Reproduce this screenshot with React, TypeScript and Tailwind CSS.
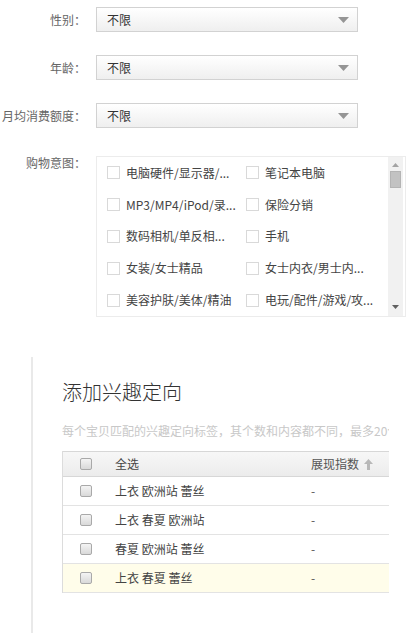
import React from 'react';

const font = { fontFamily: '"Noto Sans CJK SC", "Liberation Sans", sans-serif' };

const selects = ['性别：', '年龄：', '月均消费额度：'];

const intents = [
  ['电脑硬件/显示器/...', '笔记本电脑'],
  ['MP3/MP4/iPod/录...', '保险分销'],
  ['数码相机/单反相...', '手机'],
  ['女装/女士精品', '女士内衣/男士内...'],
  ['美容护肤/美体/精油', '电玩/配件/游戏/攻...'],
];

const rows = ['上衣 欧洲站 蕾丝', '上衣 春夏 欧洲站', '春夏 欧洲站 蕾丝', '上衣 春夏 蕾丝'];

function Select({ label }: { label: string }) {
  return (
    <div className="flex items-center h-[25px]">
      <div className="w-[87px] text-right text-[12px] text-[#666] pr-[1px]">{label}</div>
      <div className="ml-[9px] w-[262px] h-[25px] border border-[#d2d2d2] bg-gradient-to-b from-white to-[#efefef] flex items-center justify-between pl-[10px] pr-[8px]">
        <span className="text-[12px] text-[#333]">不限</span>
        <svg width="11" height="6" viewBox="0 0 11 6">
          <path d="M0 0 L11 0 L5.5 6 Z" fill="#959595" />
        </svg>
      </div>
    </div>
  );
}

function Box() {
  return <span className="block w-[13px] h-[13px] border border-[#d9d9d9] bg-white shrink-0" />;
}

function RoundBox() {
  return (
    <span className="block w-[12px] h-[12px] rounded-[2px] border border-[#a9a9a9] bg-gradient-to-b from-[#f4f4f4] to-[#d9d9d9] shrink-0" />
  );
}

export default function App() {
  return (
    <div className="w-[413px] h-[633px] bg-white overflow-hidden relative" style={font}>
      <div className="pt-[7px] flex flex-col gap-[23px]">
        {selects.map((s) => (
          <Select key={s} label={s} />
        ))}
      </div>

      <div className="flex mt-[28px]">
        <div className="w-[87px] text-right text-[12px] text-[#666] leading-[14px] pr-[1px]">购物意图：</div>
        <div className="ml-[9px] w-[310px] h-[161px] border border-[#ececec] flex">
          <div className="flex-1 flex flex-col">
            {intents.map((pair, i) => (
              <div key={i} className="h-[32px] flex items-center pl-[10px]">
                {pair.map((t) => (
                  <div key={t} className="w-[139px] flex items-center gap-[6px]">
                    <Box />
                    <span className="text-[12px] text-[#444] whitespace-nowrap">{t}</span>
                  </div>
                ))}
              </div>
            ))}
          </div>
          <div className="w-[15px] bg-[#f1f1f1] flex flex-col items-center mr-[2px]">
            <svg width="7" height="4" viewBox="0 0 7 4" className="mt-[6px]">
              <path d="M0 4 L7 4 L3.5 0 Z" fill="#a3a3a3" />
            </svg>
            <div className="mt-[4px] w-[11px] h-[17px] bg-[#c2c2c2] border border-[#b4b4b4]" />
            <div className="flex-1" />
            <svg width="7" height="4" viewBox="0 0 7 4" className="mb-[7px]">
              <path d="M0 0 L7 0 L3.5 4 Z" fill="#606060" />
            </svg>
          </div>
        </div>
      </div>

      <div className="mt-[40px] ml-[31px] border-l-2 border-[#e9e9e9] h-[280px] pl-[29px] w-[358px] overflow-hidden">
        <div className="pt-[22px] text-[20px] leading-[26px] text-[#333] font-light whitespace-nowrap">添加兴趣定向</div>
        <div className="mt-[19px] text-[12px] leading-[14px] text-[#c8c8c8] whitespace-nowrap">
          每个宝贝匹配的兴趣定向标签，其个数和内容都不同，最多20个
        </div>
        <div className="mt-[13px] w-[360px] border-l border-[#dcdcdc]">
          <div className="h-[26px] flex items-center border-t border-b border-[#d7d7d7] bg-gradient-to-b from-[#f7f7f7] to-[#ececec]">
            <div className="w-[52px] pl-[17px]">
              <RoundBox />
            </div>
            <div className="w-[196px] text-[12px] text-[#444]">全选</div>
            <div className="flex items-center gap-[5px] text-[12px] text-[#555]">
              展现指数
              <svg width="9" height="11" viewBox="0 0 9 11">
                <path d="M4.5 0 L9 5 L6 5 L6 11 L3 11 L3 5 L0 5 Z" fill="#b8b8b8" />
              </svg>
            </div>
          </div>
          {rows.map((r, i) => (
            <div
              key={r}
              className={`h-[29px] flex items-center border-b border-[#e3e3e3] ${i === 3 ? 'bg-[#fffdea]' : 'bg-white'}`}
            >
              <div className="w-[52px] pl-[17px]">
                <RoundBox />
              </div>
              <div className="w-[196px] text-[12px] text-[#444]">{r}</div>
              <div className="text-[12px] text-[#555]">-</div>
            </div>
          ))}
        </div>
      </div>
    </div>
  );
}
